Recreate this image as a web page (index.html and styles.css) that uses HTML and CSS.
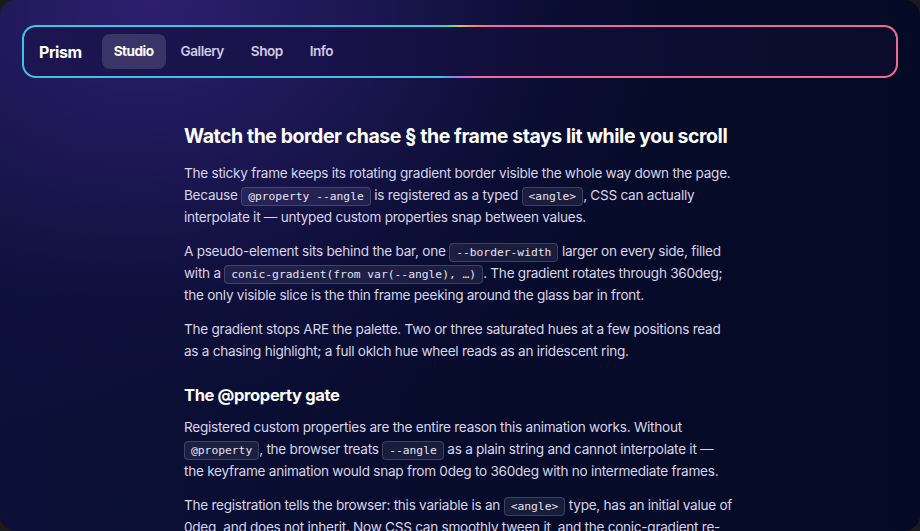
FILE: index.html
```html
<!DOCTYPE html>
<html lang="en">
<head>
<meta charset="utf-8">
<title>Prism</title>
<link rel="stylesheet" href="styles.css">
</head>
<body>
<div class="page">
  <header class="frame">
    <nav class="bar">
      <span class="brand">Prism</span>
      <a class="link active" href="#">Studio</a>
      <a class="link" href="#">Gallery</a>
      <a class="link" href="#">Shop</a>
      <a class="link" href="#">Info</a>
    </nav>
  </header>
  <main class="content">
    <h2>Watch the border chase § the frame stays lit while you scroll</h2>
    <p>The sticky frame keeps its rotating gradient border visible the whole way down the page. Because <code>@property --angle</code> is registered as a typed <code>&lt;angle&gt;</code>, CSS can actually interpolate it — untyped custom properties snap between values.</p>
    <p>A pseudo-element sits behind the bar, one <code>--border-width</code> larger on every side, filled with a <code>conic-gradient(from var(--angle), …)</code>. The gradient rotates through 360deg; the only visible slice is the thin frame peeking around the glass bar in front.</p>
    <p>The gradient stops ARE the palette. Two or three saturated hues at a few positions read as a chasing highlight; a full oklch hue wheel reads as an iridescent ring.</p>
    <h3>The @property gate</h3>
    <p>Registered custom properties are the entire reason this animation works. Without <code>@property</code>, the browser treats <code>--angle</code> as a plain string and cannot interpolate it — the keyframe animation would snap from 0deg to 360deg with no intermediate frames.</p>
    <p>The registration tells the browser: this variable is an <code>&lt;angle&gt;</code> type, has an initial value of 0deg, and does not inherit. Now CSS can smoothly tween it, and the conic-gradient re-renders every frame.</p>
  </main>
</div>
</body>
</html>
```
FILE: styles.css
```css
html, body {
  margin: 0;
  padding: 0;
  background: #1b1b1c;
}
.page {
  width: 920px;
  height: 531px;
  overflow: hidden;
  border-radius: 16px;
  box-sizing: border-box;
  padding: 25px 22px 0;
  font-family: Inter, "Noto Sans", sans-serif;
  color: #d8d4ea;
  background:
    radial-gradient(ellipse 560px 440px at 150px 0px, rgba(45, 31, 110, 1) 0%, rgba(36, 26, 96, 0.75) 35%, rgba(20, 18, 70, 0.35) 70%, rgba(10, 14, 50, 0) 100%),
    linear-gradient(90deg, #0c1038 0%, #060b2a 60%, #040a24 100%);
}
.frame {
  border-radius: 14px;
  padding: 2px;
  background: conic-gradient(from 0deg at 50% 50%,
    #d6c85a 0deg,
    #f0945c 22deg,
    #f06a95 50deg,
    #f06a95 140deg,
    #d06ad0 165deg,
    #a576f0 180deg,
    #6f95ee 200deg,
    #3cc6e6 225deg,
    #3cc6e6 300deg,
    #3ed2b4 330deg,
    #7ed48a 348deg,
    #d6c85a 360deg);
}
.bar {
  display: flex;
  align-items: center;
  gap: 3px;
  padding: 7px 16px 7px 15px;
  border-radius: 12px;
  background: linear-gradient(90deg, #1d1550 0%, #18124a 35%, #0e0d34 65%, #0b0c2c 100%);
}
.brand {
  font-weight: 700;
  font-size: 16px;
  color: #ffffff;
  margin-right: 17px;
  letter-spacing: -0.45px;
}
.link {
  display: block;
  padding: 0 12px;
  height: 35px;
  line-height: 35px;
  border-radius: 8px;
  font-size: 13.6px;
  font-weight: 600;
  color: #cfcbe6;
  text-decoration: none;
  letter-spacing: -0.5px;
}
.link.active {
  background: rgba(255, 255, 255, 0.14);
  color: #ffffff;
  font-weight: 700;
}
.content {
  width: 552px;
  margin: 44px auto 0;
}
h2 {
  margin: 0 0 12px;
  font-size: 19.5px;
  line-height: 28px;
  font-weight: 700;
  color: #ffffff;
  letter-spacing: -0.45px;
}
h3 {
  margin: 21px 0 9px;
  font-size: 16.5px;
  line-height: 24px;
  font-weight: 700;
  color: #ffffff;
  letter-spacing: -0.35px;
}
p {
  margin: 0 0 12px;
  font-size: 13.6px;
  line-height: 22px;
  letter-spacing: -0.27px;
}
code {
  font-family: "DejaVu Sans Mono", "Liberation Mono", monospace;
  font-size: 11.3px;
  line-height: 1;
  letter-spacing: 0;
  color: #e6e2f4;
  background: rgba(255, 255, 255, 0.07);
  border: 1px solid rgba(255, 255, 255, 0.16);
  border-radius: 4px;
  padding: 2px 6px;
}
```
